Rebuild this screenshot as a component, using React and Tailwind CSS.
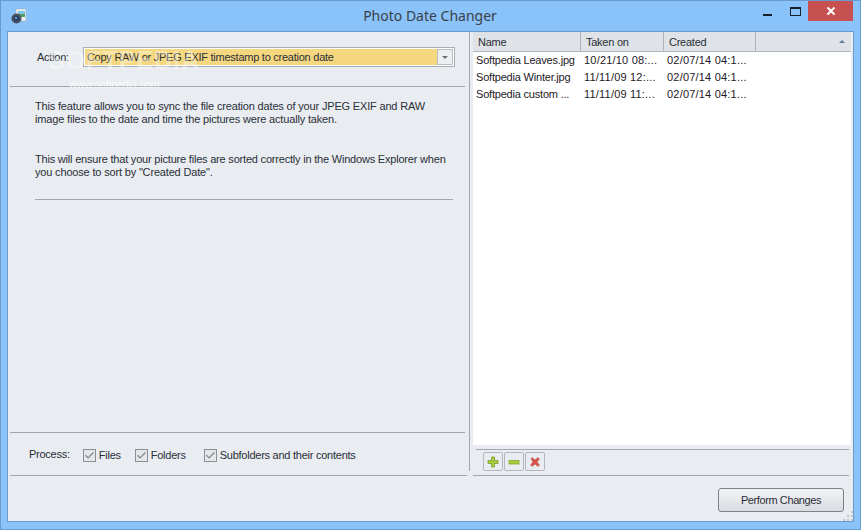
import React from "react";
import { Check } from "lucide-react";

const files = [
  ["Softpedia Leaves.jpg", "10/21/10 08:...", "02/07/14 04:1..."],
  ["Softpedia Winter.jpg", "11/11/09 12:...", "02/07/14 04:1..."],
  ["Softpedia custom ...", "11/11/09 11:...", "02/07/14 04:1..."],
];

const CheckItem = ({ label, className }) => (
  <div className={`flex items-center ${className}`}>
    <span className="w-[13px] h-[13px] border border-[#8a8f96] bg-[#e4e6ea] flex items-center justify-center">
      <Check size={11} strokeWidth={2.5} className="text-[#7d8288]" />
    </span>
    <span className="ml-[3px]">{label}</span>
  </div>
);

const ToolButton = ({ children }) => (
  <button className="w-[20px] h-[19px] border border-[#b4b8bd] rounded-[2px] bg-[#e9ecf1] flex items-center justify-center">
    {children}
  </button>
);

const App = () => {
  return (
    <div
      className="w-[861px] h-[530px] flex flex-col bg-[#8ac3f9] border border-[#6a9bcc] text-[11px] tracking-[-0.25px] leading-[13px] whitespace-nowrap text-[#2a2f38] relative overflow-hidden"
      style={{ fontFamily: '"Liberation Sans", Arial, sans-serif' }}
    >
      {/* title bar */}
      <div className="h-[30px] shrink-0 flex items-center relative">
        <svg width="16" height="16" viewBox="0 0 16 16" className="ml-[10px] mt-[-1px]">
          <rect x="5" y="1" width="10" height="12" fill="#eef2f4" stroke="#9fb0bd" strokeWidth="0.6" />
          <rect x="7" y="3" width="7" height="6" fill="#4f9e62" />
          <rect x="7" y="3" width="7" height="3" fill="#7cc3e8" />
          <circle cx="5.5" cy="10.5" r="5" fill="#46505e" />
          <circle cx="5.5" cy="10.5" r="2.6" fill="#1f3f6e" />
          <circle cx="5" cy="10" r="1" fill="#9db6d8" />
        </svg>
        <div
          className="flex-1 text-center text-[14px] tracking-normal text-[#3a3f48] ml-[70px] mt-[-1px]"
          style={{ fontFamily: '"Noto Sans", sans-serif' }}
        >
          Photo Date Changer
        </div>
        <div className="flex items-start self-start">
          <div className="w-[9px] h-[2px] bg-[#16202c] mt-[13px] mr-[18px]" />
          <div className="w-[11px] h-[9px] border border-t-2 border-[#16202c] mt-[6px] mr-[7px]" />
          <div className="w-[45px] h-[20px] bg-[#c75050] flex items-center justify-center mr-[7px]">
            <svg width="10" height="10" viewBox="0 0 10 10">
              <path d="M1.5 1.5L8.5 8.5M8.5 1.5L1.5 8.5" stroke="#fff" strokeWidth="2" />
            </svg>
          </div>
        </div>
      </div>

      {/* client area */}
      <div className="flex-1 mx-[6px] mb-[7px] border border-[#6a9bcc] bg-[#e9ecf1] flex flex-col">
        <div className="h-[443px] shrink-0 flex">
          {/* left pane */}
          <div className="w-[461px] shrink-0 flex flex-col">
            <div className="flex items-center h-[54px] pl-[29px] pb-[4px]">
              <span className="pt-px">Action:</span>
              <div className="ml-[14px] w-[372px] h-[20px] border border-[#a9adb3] bg-white p-px flex">
                <div className="flex-1 bg-[#f5d77f] text-[#2a2f38] pl-[2px] pt-px flex items-center">
                  Copy RAW or JPEG EXIF timestamp to creation date
                </div>
                <div className="w-[16px] bg-[#eceef1] border border-[#b9bdc2] flex items-center justify-center">
                  <div className="w-0 h-0 border-x-[3px] border-x-transparent border-t-[3px] border-t-[#6b7078]" />
                </div>
              </div>
            </div>
            <div className="h-px bg-[#a4a8ad] ml-[2px] mr-[4px]" />
            <div className="pl-[27px] mt-[13px] text-[#2a2f38] tracking-[-0.17px]">
              <p>This feature allows you to sync the file creation dates of your JPEG EXIF and RAW</p>
              <p>image files to the date and time the pictures were actually taken.</p>
              <p className="mt-[27px] tracking-[-0.2px]">This will ensure that your picture files are sorted correctly in the Windows Explorer when</p>
              <p>you choose to sort by "Created Date".</p>
            </div>
            <div className="h-px bg-[#a4a8ad] ml-[27px] mr-[16px] mt-[20px]" />
            <div className="flex-1" />
            <div className="h-px bg-[#a4a8ad] ml-[2px] mr-[4px]" />
            <div className="h-[42px] flex items-center pl-[21px] pt-[2px]">
              <span className="mt-[-1px]">Process:</span>
              <CheckItem label="Files" className="ml-[13px]" />
              <CheckItem label="Folders" className="ml-[14px]" />
              <CheckItem label="Subfolders and their contents" className="ml-[18px]" />
            </div>
          </div>

          {/* splitter */}
          <div className="w-[4px] shrink-0 h-[439px] border-l border-[#a4a8ad]" />

          {/* right pane */}
          <div className="flex-1 flex flex-col pr-[2px]">
            <div className="h-[413px] bg-white flex flex-col">
              <div className="h-[20px] shrink-0 flex bg-[#dfe2e6] border-b border-[#b0b4b9]">
                <div className="w-[108px] border-r border-[#b0b4b9] pl-[5px] pt-px flex items-center">Name</div>
                <div className="w-[83px] border-r border-[#b0b4b9] pl-[5px] pt-px flex items-center">Taken on</div>
                <div className="w-[92px] border-r border-[#b0b4b9] pl-[5px] pt-px flex items-center">Created</div>
                <div className="flex-1 flex items-center justify-end pr-[6px]">
                  <div className="w-0 h-0 border-x-[3px] border-x-transparent border-b-[3px] border-b-[#5e7f9a]" />
                </div>
              </div>
              {files.map((f) => (
                <div key={f[0]} className="h-[17px] shrink-0 flex items-center text-[#1e2026]">
                  <div className="w-[108px] pl-[3px] tracking-[-0.2px]">{f[0]}</div>
                  <div className="w-[83px] pl-[3px] tracking-[0.2px]">{f[1]}</div>
                  <div className="pl-[3px] tracking-[0.2px]">{f[2]}</div>
                </div>
              ))}
            </div>
            <div className="h-px bg-[#a4a8ad] ml-[3px] mr-[2px] mt-[4px]" />
            <div className="flex gap-px ml-[10px] mt-[2px]">
              <ToolButton>
                <svg width="12" height="12" viewBox="0 0 12 12">
                  <path d="M4.5 1H7.5V4.5H11V7.5H7.5V11H4.5V7.5H1V4.5H4.5Z" fill="#a5cc3c" stroke="#7c9a2c" strokeWidth="0.8" />
                </svg>
              </ToolButton>
              <ToolButton>
                <svg width="12" height="12" viewBox="0 0 12 12">
                  <rect x="1" y="4.5" width="10" height="3.5" fill="#a5cc3c" stroke="#8aa832" strokeWidth="0.8" />
                </svg>
              </ToolButton>
              <ToolButton>
                <svg width="12" height="12" viewBox="0 0 12 12">
                  <path d="M2 3L3 1.5L6 4L9 1.5L10.5 3L8 6L10.5 9L9 10.5L6 8L3 10.5L1.5 9L4 6Z" fill="#d9534a" stroke="#c0675f" strokeWidth="0.7" />
                </svg>
              </ToolButton>
            </div>
          </div>
        </div>

        {/* bottom bar */}
        <div className="flex ml-[2px] mr-[4px]">
          <div className="h-px bg-[#a4a8ad] w-[457px]" />
          <div className="h-px bg-[#a4a8ad] flex-1 ml-[6px]" />
        </div>
        <div className="flex-1 flex justify-end pr-[9px] pt-[12px] relative">
          <button className="w-[126px] h-[24px] rounded-[3px] border border-[#7d8288] bg-gradient-to-b from-[#f2f3f5] to-[#d9dce1] text-[#2a2f38] tracking-[-0.4px]">
            Perform Changes
          </button>
          <svg width="10" height="10" viewBox="0 0 10 10" className="absolute right-0 bottom-0" fill="#c3c7cc">
            <rect x="8" y="0" width="2" height="2" />
            <rect x="8" y="4" width="2" height="2" />
            <rect x="4" y="4" width="2" height="2" />
            <rect x="8" y="8" width="2" height="2" />
            <rect x="4" y="8" width="2" height="2" />
            <rect x="0" y="8" width="2" height="2" />
          </svg>
        </div>
      </div>

      {/* watermark */}
      <div className="absolute left-[47px] top-[46px] text-[25px] leading-[26px] font-bold tracking-[1px] text-white/40 pointer-events-none">
        SOFTPEDIA
      </div>
      <div className="absolute left-[68px] top-[77px] text-[11px] text-white/70 pointer-events-none">
        www.softpedia.com
      </div>
    </div>
  );
};

export default App;
